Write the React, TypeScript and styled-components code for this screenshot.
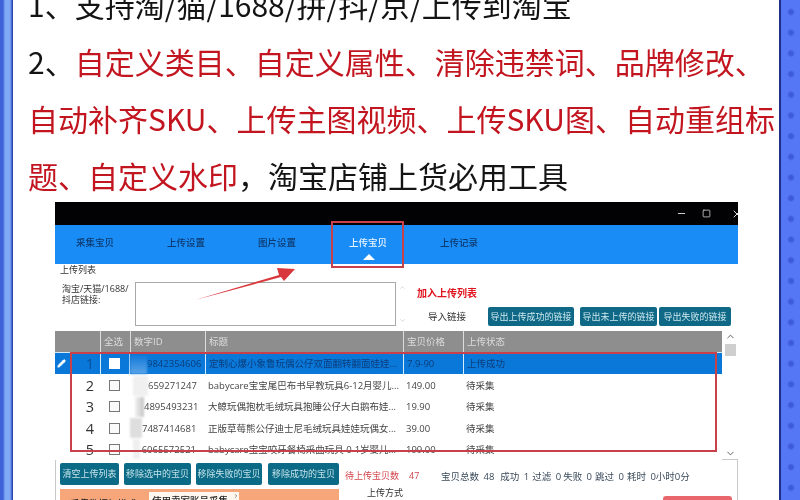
import React from "react";
import styled, { createGlobalStyle } from "styled-components";
import { ChevronUp, ChevronDown, ChevronRight, Minus, Square, X, Pencil } from "lucide-react";

const Global = createGlobalStyle`
  html, body { margin: 0; padding: 0; background: #fff; }
  body { width: 800px; height: 500px; overflow: hidden; }
`;
const CJK = `"Noto Sans CJK SC", sans-serif`;
const UI = `"Open Sans", "Noto Sans CJK SC", sans-serif`;

const Page = styled.div`
  display: flex; width: 800px; height: 500px; overflow: hidden;
  font-family: ${CJK};
`;
const LeftEdge = styled.div`
  width: 13px; flex: none;
  background: linear-gradient(90deg, #3f62d8 0, #3f62d8 3px, #7fa9f2 5px, #7fa9f2 10px, #4a6fdc 11.5px, #1d2d86 13px);
`;
const RightEdge = styled.div`
  width: 21px; flex: none;
  border-left: 2px solid #1f2f88;
  box-sizing: border-box;
  background-color: #5577f6;
  background-image: radial-gradient(circle at 10px 10px, #3d5bd8 0, #3d5bd8 2px, transparent 4px);
  background-size: 21px 20.7px;
  background-position: 0 2px;
`;
const Sheet = styled.main`
  flex: 1; min-width: 0; overflow: hidden; background: #fff;
`;
const Copy = styled.div`
  margin: -24px 0 0 15px;
  font-size: 30px; line-height: 57px; color: #141414;
  white-space: nowrap; height: 228px; font-weight: 400; letter-spacing: 0;
  filter: blur(0.35px);
`;
const CopyLine = styled.div``;
const Red = styled.span` color: #c2151f; `;

const Shot = styled.section`
  position: relative; width: 683px; height: 298px; margin: -2px 0 0 42px; overflow: hidden;
  background: #fff; font-family: ${UI}; color: #333;
  filter: blur(0.45px);
`;
const TitleBar = styled.div`
  height: 23px; background: #020204; color: #ddd;
  display: flex; align-items: center; justify-content: flex-end; gap: 15px;
  margin-right: -5px;
`;
const CloseIcon = styled(X)`
  margin-left: 5px;
`;
const Nav = styled.nav`
  height: 39px; background: #1a8cf6; display: flex; align-items: center; gap: 53px;
  padding: 0 0 6px 21px; box-sizing: border-box;
`;
const NavItem = styled.div<{ $on?: boolean }>`
  position: relative; font-size: 9.5px; font-weight: 500; white-space: nowrap; width: 38px;
  color: ${(p) => (p.$on ? "#e8f4ff" : "#0d3a70")};
  ${(p) => p.$on && `
    &::after {
      content: ""; position: absolute; left: 14px; top: 19px; width: 0; height: 0;
      border-left: 6px solid transparent; border-right: 6px solid transparent;
      border-bottom: 6px solid #fff;
    }`}
`;
const FormArea = styled.div`
  height: 67px; padding-left: 5px; position: relative; box-sizing: border-box;
`;
const FormTitle = styled.div`
  font-size: 9px; line-height: 11px; height: 18px; color: #333;
`;
const FormRow = styled.div`
  display: flex; align-items: flex-start;
`;
const LinkLabel = styled.div`
  width: 70px; padding: 1px 0 0 2px; box-sizing: border-box;
  font-size: 9px; line-height: 11px; color: #333; flex: none; white-space: nowrap;
`;
const LinkBox = styled.div`
  width: 261px; height: 44px; border: 1px solid #a9a9a9; box-sizing: border-box; flex: none; background: #fff;
  margin-left: 5px;
`;
const BoxScroll = styled.div`
  width: 12px; height: 44px; color: #bbb; display: flex; flex-direction: column;
  justify-content: space-between; align-items: center; flex: none; padding: 2px 0; box-sizing: border-box;
`;
const Actions = styled.div`
  flex: 1; display: flex; flex-direction: column; padding-left: 9px; height: 44px;
`;
const AddLabel = styled.div`
  font-size: 10px; font-weight: 700; color: #e0141e; line-height: 12px; margin-top: 5px; font-family: ${CJK};
`;
const ExportRow = styled.div`
  display: flex; align-items: center; margin-top: 8px;
`;
const ImportLabel = styled.div`
  width: 71px; padding-left: 11px; box-sizing: border-box; font-size: 9.5px; color: #333; line-height: 19px; flex: none;
`;
const TealButton = styled.div<{ $w: number; $gap?: number }>`
  width: ${(p) => p.$w}px; margin-right: ${(p) => p.$gap ?? 0}px; height: 19px; line-height: 19px; flex: none;
  background: #0e6886; color: #cfe9ef; border-radius: 2px; font-size: 9px; text-align: center; white-space: nowrap;
`;
const TableWrap = styled.div`
  display: flex; height: 128px;
`;
const Table = styled.div`
  width: 667px; flex: none;
`;
const cols = "45px 30px 75px 198px 60px 1fr";
const Header = styled.div`
  display: grid; grid-template-columns: ${cols}; height: 22px; background: #8e8e8e; color: #dcdcdc;
  font-size: 9.5px; line-height: 22px; border-bottom: 1px solid #d5e8f8; box-sizing: border-box;
`;
const HeadCell = styled.div`
  border-left: 1px solid #dcdcdc; padding-left: 3px; white-space: nowrap; overflow: hidden;
  &:first-child { border-left: 0; }
`;
const Row = styled.div<{ $on?: boolean }>`
  display: grid; grid-template-columns: ${cols}; height: 21.2px; align-items: center;
  font-size: 9.5px; color: ${(p) => (p.$on ? "#0b3d7c" : "#444")};
  background: ${(p) => (p.$on ? "#0a78d8" : "#fff")};
  margin-bottom: ${(p) => (p.$on ? "1px" : "0")};
`;
const RowHead = styled.div`
  display: flex; align-items: center; justify-content: space-between; padding: 0 5px 0 2px; height: 100%;
`;
const RowNum = styled.span<{ $on?: boolean }>`
  font-size: 14.5px; color: ${(p) => (p.$on ? "#0b4f9c" : "#333")};
  margin-right: 1px;
`;
const CheckCell = styled.div<{ $on?: boolean }>`
  height: 100%; display: flex; align-items: center; justify-content: center; padding-right: 1px; box-sizing: border-box;
  ${(p) => p.$on && "border-left: 1px solid #d8ecff; border-right: 1px solid #d8ecff;"}
`;
const Check = styled.span<{ $on?: boolean }>`
  width: 9px; height: 9px; display: block; border: 1px solid #777; background: ${(p) => (p.$on ? "#fff" : "#fafafa")};
  ${(p) => p.$on && "border-color: #fff;"}
`;
const IdCell = styled.div`
  display: flex; justify-content: space-between; align-items: center; padding-right: 9px; position: relative; height: 100%;
  white-space: nowrap;
`;
const Thumb = styled.span<{ $x: number; $w: number; $c: string }>`
  width: ${(p) => p.$w}px; height: 20px; margin-left: ${(p) => p.$x}px; flex: none;
  background: ${(p) => p.$c}; filter: blur(0.8px);
`;
const TitleCell = styled.div<{ $on?: boolean }>`
  height: 100%; line-height: 21px; padding-left: 3px; white-space: nowrap; overflow: hidden; min-width: 0;
  ${(p) => p.$on && "border-left: 1px solid #d8ecff;"}
`;
const PriceCell = styled.div<{ $on?: boolean }>`
  height: 100%; line-height: 21px; padding-left: 3px; white-space: nowrap;
  ${(p) => p.$on && "border-left: 1px solid #d8ecff;"}
`;
const StatusCell = styled.div<{ $on?: boolean }>`
  height: 100%; line-height: 21px; padding-left: 3px; white-space: nowrap;
  ${(p) => p.$on && "border-left: 1px solid #d8ecff;"}
`;
const ScrollBar = styled.div`
  width: 16px; flex: none; display: flex; flex-direction: column; align-items: center; color: #555; height: 128px;
`;
const ScrollThumb = styled.div`
  width: 11px; height: 12px; background: #cfcfcf; margin: 2px 0 auto 1px;
`;
const Lower = styled.div`
  border: 1px solid #c9c9c9; border-bottom: 0; height: 45px; box-sizing: border-box;
  padding: 3px 5px 0 4px;
  display: grid; grid-template-columns: 279px 1fr; column-gap: 6px;
`;
const LowerLeft = styled.div`
  display: flex; flex-direction: column;
`;
const ClearRow = styled.div`
  display: flex; height: 22px; margin-bottom: 4px;
`;
const ClearButton = styled.div<{ $w: number; $gap: number }>`
  width: ${(p) => p.$w}px; margin-right: ${(p) => p.$gap}px; height: 22px; line-height: 21px; flex: none; text-align: center;
  background: #0b6a86; color: #c6e4ea; font-size: 9px; border-radius: 2px; white-space: nowrap;
`;
const OrangePanel = styled.div`
  background: #f6a679; height: 30px; display: flex; padding: 3px 0 0 10px; box-sizing: border-box;
  font-size: 9.5px; color: #222; font-weight: 500;
`;
const ModeLabel = styled.div`
  width: 79px; flex: none; padding-top: 4px; white-space: nowrap;
`;
const ModeSelect = styled.div`
  width: 90px; height: 20px; background: #fdf7f0; line-height: 17px; padding-left: 3px; box-sizing: border-box; white-space: nowrap;
  display: flex; align-items: flex-start; gap: 5px;
`;
const LowerRight = styled.div`
  display: flex; flex-direction: column; font-size: 9.5px;
`;
const Stats = styled.div`
  display: flex; height: 22px; align-items: center; white-space: nowrap; padding-top: 3px; box-sizing: border-box;
  word-spacing: 2px;
`;
const StatRed = styled.span`
  color: #d2454b; width: 96px; flex: none; font-size: 9px; word-spacing: 0;
`;
const StatRedNum = styled.span` color: #d2454b; margin-left: 10px; `;
const StatPair = styled.span<{ $gap: number }>` margin-right: ${(p) => p.$gap}px; color: #3a4a5a; `;
const MethodRow = styled.div`
  display: flex; justify-content: space-between; align-items: flex-start; padding: 1px 0 0 22px; color: #333; font-size: 9px;
`;
const RedButton = styled.div`
  width: 69px; height: 14px; margin-top: 10px; background: #e9666c; border-radius: 3px 3px 0 0;
`;
const RedBox = styled.div<{ $l: number; $t: number; $w: number; $h: number }>`
  position: absolute; left: ${(p) => p.$l}px; top: ${(p) => p.$t}px; width: ${(p) => p.$w}px; height: ${(p) => p.$h}px;
  border: 2px solid #c8404a; box-sizing: border-box; pointer-events: none;
`;
const ArrowArt = styled.svg`
  position: absolute; left: 138px; top: 62px; width: 105px; height: 40px;
`;

const rows = [
  { n: 1, id: "9842354606", t: "定制心爆小象鲁玩偶公仔双面翻转翻面娃娃...", p: "7.9-90", s: "上传成功", th: [0, 17, "linear-gradient(180deg,#0a78d8 0,#3a8fe0 55%,#5aa4e6 100%)"] },
  { n: 2, id: "659271247", t: "babycare宝宝尾巴布书早教玩具6-12月婴儿...", p: "149.00", s: "待采集", th: [3, 15, "#f0f0f0"] },
  { n: 3, id: "4895493231", t: "大鲸玩偶抱枕毛绒玩具抱睡公仔大白鹅布娃...", p: "19.90", s: "待采集", th: [5, 9, "linear-gradient(90deg,#f2f2f2,#c4c4c4)"] },
  { n: 4, id: "7487414681", t: "正版草莓熊公仔迪士尼毛绒玩具娃娃玩偶女...", p: "39.00", s: "待采集", th: [0, 12, "#dedede"] },
  { n: 5, id: "6065572521", t: "babycare宝宝咬牙餐椅采曲玩具 0-1岁婴儿...", p: "199.00", s: "待采集", th: [3, 7, "#efefef"] },
] as const;

export default function App() {
  return (
    <Page>
      <Global />
      <LeftEdge />
      <Sheet>
        <Copy>
          <CopyLine>1、支持淘/猫/1688/拼/抖/京/上传到淘宝</CopyLine>
          <CopyLine>2、<Red>自定义类目、自定义属性、清除违禁词、品牌修改、</Red></CopyLine>
          <CopyLine><Red>自动补齐SKU、上传主图视频、上传SKU图、自动重组标</Red></CopyLine>
          <CopyLine><Red>题、自定义水印</Red>，淘宝店铺上货必用工具</CopyLine>
        </Copy>
        <Shot>
          <TitleBar>
            <Minus size={11} />
            <Square size={9} />
            <CloseIcon size={12} />
          </TitleBar>
          <Nav>
            <NavItem>采集宝贝</NavItem>
            <NavItem>上传设置</NavItem>
            <NavItem>图片设置</NavItem>
            <NavItem $on>上传宝贝</NavItem>
            <NavItem>上传记录</NavItem>
          </Nav>
          <FormArea>
            <FormTitle>上传列表</FormTitle>
            <FormRow>
              <LinkLabel>淘宝/天猫/1688/<br />抖店链接:</LinkLabel>
              <LinkBox />
              <BoxScroll>
                <ChevronUp size={7} />
                <ChevronDown size={7} />
              </BoxScroll>
              <Actions>
                <AddLabel>加入上传列表</AddLabel>
                <ExportRow>
                  <ImportLabel>导入链接</ImportLabel>
                  <TealButton $w={86} $gap={6}>导出上传成功的链接</TealButton>
                  <TealButton $w={77} $gap={2}>导出未上传的链接</TealButton>
                  <TealButton $w={72}>导出失败的链接</TealButton>
                </ExportRow>
              </Actions>
            </FormRow>
          </FormArea>
          <TableWrap>
            <Table>
              <Header>
                <HeadCell />
                <HeadCell>全选</HeadCell>
                <HeadCell>数字ID</HeadCell>
                <HeadCell>标题</HeadCell>
                <HeadCell>宝贝价格</HeadCell>
                <HeadCell>上传状态</HeadCell>
              </Header>
              {rows.map((r) => {
                const on = r.n === 1;
                return (
                  <Row key={r.n} $on={on}>
                    <RowHead>
                      {on ? <Pencil size={9} color="#fff" fill="#fff" /> : <span />}
                      <RowNum $on={on}>{r.n}</RowNum>
                    </RowHead>
                    <CheckCell $on={on}><Check $on={on} /></CheckCell>
                    <IdCell>
                      <Thumb $x={r.th[0]} $w={r.th[1]} $c={r.th[2]} />
                      <span>{r.id}</span>
                    </IdCell>
                    <TitleCell $on={on}>{r.t}</TitleCell>
                    <PriceCell $on={on}>{r.p}</PriceCell>
                    <StatusCell $on={on}>{r.s}</StatusCell>
                  </Row>
                );
              })}
            </Table>
            <ScrollBar>
              <ChevronUp size={11} />
              <ScrollThumb />
              <ChevronDown size={11} />
            </ScrollBar>
          </TableWrap>
          <Lower>
            <LowerLeft>
              <ClearRow>
                <ClearButton $w={59} $gap={5}>清空上传列表</ClearButton>
                <ClearButton $w={67} $gap={5}>移除选中的宝贝</ClearButton>
                <ClearButton $w={66} $gap={6}>移除失败的宝贝</ClearButton>
                <ClearButton $w={71} $gap={0}>移除成功的宝贝</ClearButton>
              </ClearRow>
              <OrangePanel>
                <ModeLabel>采集数据加模式:</ModeLabel>
                <ModeSelect>使用卖家账号采集<ChevronRight size={8} /></ModeSelect>
              </OrangePanel>
            </LowerLeft>
            <LowerRight>
              <Stats>
                <StatRed>待上传宝贝数<StatRedNum>47</StatRedNum></StatRed>
                <StatPair $gap={6}>宝贝总数 48</StatPair>
                <StatPair $gap={3}>成功 1</StatPair>
                <StatPair $gap={2}>过滤 0</StatPair>
                <StatPair $gap={3}>失败 0</StatPair>
                <StatPair $gap={3}>跳过 0</StatPair>
                <StatPair $gap={0}>耗时 0小时0分</StatPair>
              </Stats>
              <MethodRow>
                上传方式
                <RedButton />
              </MethodRow>
            </LowerRight>
          </Lower>
          <RedBox $l={276} $t={19} $w={73} $h={47} />
          <RedBox $l={15} $t={150} $w={647} $h={100} />
          <ArrowArt viewBox="0 0 105 40" aria-hidden="true">
            <polygon points="2,36 86,11 84,4 102,5 91,17 88,13" fill="#d8383c" />
          </ArrowArt>
        </Shot>
      </Sheet>
      <RightEdge />
    </Page>
  );
}
